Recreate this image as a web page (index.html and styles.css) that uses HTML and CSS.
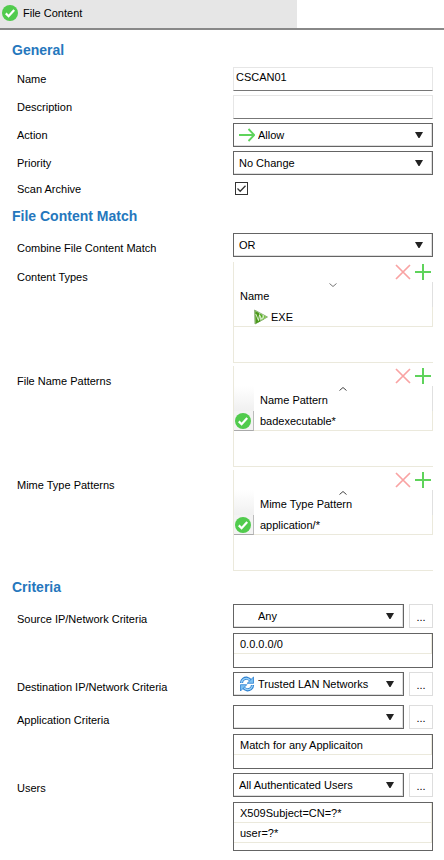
FILE: index.html
```html
<!DOCTYPE html>
<html lang="en">
<head>
    <meta charset="utf-8">
    <title>File Content</title>
    <link rel="stylesheet" href="styles.css">
</head>
<body>
    <!-- shared icons -->
    <svg class="defs" width="0" height="0">
        <symbol id="i-ok" viewBox="0 0 16 16">
            <circle cx="8" cy="8" r="8" fill="#51cb4d"/>
            <path d="M3.800 8.400l2.800 2.800 5.600-6.200" fill="none" stroke="#fff" stroke-width="2.200"/>
        </symbol>
        <symbol id="i-arrow" viewBox="0 0 10 8">
            <path d="M1 1h8L5.500 7h-1z" fill="#222"/>
        </symbol>
        <symbol id="i-del" viewBox="0 0 16 16">
            <path d="M1 1l14 14M15 1L1 15" fill="none" stroke="#f9a3a3" stroke-width="1.700"/>
        </symbol>
        <symbol id="i-add" viewBox="0 0 16 16">
            <path d="M8 0v16M0 8h16" fill="none" stroke="#5fd35b" stroke-width="2"/>
        </symbol>
    </svg>

    <div class="tab-bar">
        <div class="tab"><svg class="icon"><use href="#i-ok"/></svg>File Content</div>
    </div>

    <form class="form">
        <h2>General</h2>
        <div class="section general">
            <div class="row">
                <label for="name">Name</label>
                <input class="text" id="name" type="text" value="CSCAN01">
            </div>
            <div class="row">
                <label for="description">Description</label>
                <input class="text" id="description" type="text">
            </div>
            <div class="row">
                <label for="action">Action</label>
                <div class="combo has-icon">
                    <select id="action"><option>Allow</option></select>
                    <svg class="combo-icon" viewBox="0 0 16 16"><path d="M0 8h15M9.500 2L15.300 8l-5.800 6" fill="none" stroke="#5fd35b" stroke-width="1.800"/></svg>
                    <svg class="combo-arrow"><use href="#i-arrow"/></svg>
                </div>
            </div>
            <div class="row">
                <label for="priority">Priority</label>
                <div class="combo">
                    <select id="priority"><option>No Change</option></select>
                    <svg class="combo-arrow"><use href="#i-arrow"/></svg>
                </div>
            </div>
            <div class="row check-row">
                <label for="archive">Scan Archive</label>
                <div class="check">
                    <input id="archive" type="checkbox" checked>
                    <svg class="tick" viewBox="0 0 13 13"><path d="M2.500 6.500l2.700 2.700 5.300-5.500" fill="none" stroke="#333" stroke-width="1.300"/></svg>
                </div>
            </div>
        </div>

        <h2>File Content Match</h2>
        <div class="section match">
            <div class="row combine-row">
                <label for="combine">Combine File Content Match</label>
                <div class="combo">
                    <select id="combine"><option>OR</option></select>
                    <svg class="combo-arrow"><use href="#i-arrow"/></svg>
                </div>
            </div>
            <div class="row">
                <span class="label" id="l-types">Content Types</span>
                <div class="grid">
                    <div class="tools">
                        <button type="button" aria-label="Remove"><svg class="icon"><use href="#i-del"/></svg></button>
                        <button type="button" aria-label="Add"><svg class="icon"><use href="#i-add"/></svg></button>
                    </div>
                    <table aria-labelledby="l-types">
                        <tr><th>Name<svg class="sort" viewBox="0 0 8 4"><path d="M0.500 0.500L4 3.500 7.500 0.500" fill="none" stroke="#777"/></svg></th></tr>
                        <tr><td class="tree"><div class="type"><svg class="type-icon" viewBox="0 0 14 16">
                            <path d="M0.500 1L13.500 8 1 15z" fill="#cfe6c0" stroke="#8fb27c"/>
                            <path d="M1.200 2l3.800 2 1.500 8.200-5 2.500z" fill="#4c9a1c"/>
                            <path d="M5.500 4.500l2.700 1.300 1.500 4.700-2 1z" fill="#55ad22"/>
                            <path d="M9.500 6.300L12.500 8l-2.300 1.600z" fill="#79c544"/>
                            <path d="M1.800 5l2.700 6.500 1-5.500 2.500 4.500 1.500-4" fill="none" stroke="#e6f5dc" stroke-width=".9"/>
                        </svg>EXE</div></td></tr>
                    </table>
                </div>
            </div>
            <div class="row">
                <span class="label" id="l-names">File Name Patterns</span>
                <div class="grid">
                    <div class="tools">
                        <button type="button" aria-label="Remove"><svg class="icon"><use href="#i-del"/></svg></button>
                        <button type="button" aria-label="Add"><svg class="icon"><use href="#i-add"/></svg></button>
                    </div>
                    <table aria-labelledby="l-names">
                        <tr><td class="corner"></td><th>Name Pattern<svg class="sort" viewBox="0 0 8 4"><path d="M0.500 3.500L4 0.500 7.500 3.500" fill="none" stroke="#444"/></svg></th></tr>
                        <tr><td class="state"><svg class="icon"><use href="#i-ok"/></svg></td><td>badexecutable*</td></tr>
                    </table>
                </div>
            </div>
            <div class="row">
                <span class="label" id="l-mime">Mime Type Patterns</span>
                <div class="grid">
                    <div class="tools">
                        <button type="button" aria-label="Remove"><svg class="icon"><use href="#i-del"/></svg></button>
                        <button type="button" aria-label="Add"><svg class="icon"><use href="#i-add"/></svg></button>
                    </div>
                    <table aria-labelledby="l-mime">
                        <tr><td class="corner"></td><th>Mime Type Pattern<svg class="sort" viewBox="0 0 8 4"><path d="M0.500 3.500L4 0.500 7.500 3.500" fill="none" stroke="#444"/></svg></th></tr>
                        <tr><td class="state"><svg class="icon"><use href="#i-ok"/></svg></td><td>application/*</td></tr>
                    </table>
                </div>
            </div>
        </div>

        <h2>Criteria</h2>
        <div class="section criteria">
            <div class="row">
                <label for="source">Source IP/Network Criteria</label>
                <div class="field">
                    <div class="pick">
                        <div class="combo has-icon">
                            <select id="source"><option>Any</option></select>
                            <svg class="combo-arrow"><use href="#i-arrow"/></svg>
                        </div>
                        <button class="more" type="button">...</button>
                    </div>
                    <ul class="list"><li>0.0.0.0/0</li></ul>
                </div>
            </div>
            <div class="row">
                <label for="destination">Destination IP/Network Criteria</label>
                <div class="pick">
                    <div class="combo has-icon">
                        <select id="destination"><option>Trusted LAN Networks</option></select>
                        <svg class="combo-icon" viewBox="0 0 16 16">
                            <path d="M2.500 7C2.500 3.500 5.500 2 8 2.200c1.500.300 2.600 1 3.500 2" fill="none" stroke="#2b7fd0" stroke-width="3.200"/>
                            <path d="M2.500 6.800C2.700 4 5.500 2 8 2.500c1.300.200 2.300.9 3.300 2" fill="none" stroke="#9bd2f8" stroke-width="1.400"/>
                            <path d="M14.500 1v6.300H8.200z" fill="#7cc0f2" stroke="#2b7fd0" stroke-width=".8"/>
                            <path d="M13.500 9c0 3.500-3 5-5.500 4.800-1.500-.3-2.600-1-3.500-2" fill="none" stroke="#2b7fd0" stroke-width="3.200"/>
                            <path d="M13.500 9.200c-.2 2.800-3 4.800-5.500 4.300-1.300-.2-2.300-.9-3.300-2" fill="none" stroke="#9bd2f8" stroke-width="1.400"/>
                            <path d="M1.500 15V8.700h6.300z" fill="#7cc0f2" stroke="#2b7fd0" stroke-width=".8"/>
                        </svg>
                        <svg class="combo-arrow"><use href="#i-arrow"/></svg>
                    </div>
                    <button class="more" type="button">...</button>
                </div>
            </div>
            <div class="row app-row">
                <label for="application">Application Criteria</label>
                <div class="field">
                    <div class="pick">
                        <div class="combo">
                            <select id="application"><option></option></select>
                            <svg class="combo-arrow"><use href="#i-arrow"/></svg>
                        </div>
                        <button class="more" type="button">...</button>
                    </div>
                    <ul class="list"><li>Match for any Applicaiton</li></ul>
                </div>
            </div>
            <div class="row">
                <label for="users">Users</label>
                <div class="field">
                    <div class="pick">
                        <div class="combo">
                            <select id="users"><option>All Authenticated Users</option></select>
                            <svg class="combo-arrow"><use href="#i-arrow"/></svg>
                        </div>
                        <button class="more" type="button">...</button>
                    </div>
                    <ul class="list"><li>X509Subject=CN=?*</li><li>user=?*</li></ul>
                </div>
            </div>
        </div>
    </form>
</body>
</html>
```
FILE: styles.css
```css
* { box-sizing: border-box; }
body { margin: 0; background: #fff; color: #000; font: 11px/14px "Liberation Sans", Arial, sans-serif; }
svg { display: block; }
button, input, select { font: inherit; color: inherit; margin: 0; border-radius: 0; }
.defs { position: absolute; }
.icon { width: 16px; height: 16px; }

/* tab strip */
.tab-bar { border-bottom: 2px solid #888; }
.tab { display: flex; align-items: center; gap: 5px; width: 67%; height: 28px; padding: 0 2px 2px; background: #e6e6e6; }

.form { padding: 0 11px 8px 12px; }
h2 { margin: 0; padding: 12px 0 9px; font-size: 14px; line-height: 16px; color: #2577bd; }
.section { display: flex; flex-direction: column; gap: 4px; }
.row { display: grid; grid-template-columns: 221px minmax(0, 1fr); align-items: start; }
.row label, .label { padding: 8px 0 0 5px; }
.general .row label { padding-top: 5px; }
.general .check-row label { padding-top: 3px; }
.match { gap: 3px; }
.match + h2 { padding: 8px 0 9px; }
.general + h2 { padding: 9px 0; }
.combine-row { margin-bottom: 2px; }
.app-row { margin-top: 5px; }

/* controls */
.text { width: 100%; height: 24px; padding: 0 2px 4px; border: 1px solid #e6e6e6; border-bottom-color: #777; background: #fff; }
.combo { position: relative; flex: 1; min-width: 0; }
.combo select { display: block; width: 100%; height: 24px; padding: 0 24px 0 5px; border: 1px solid #646464; background: #fff; box-shadow: inset -1px -1px #ddd; appearance: none; }
.has-icon select { padding-left: 24px; }
.combo-icon { position: absolute; left: 6px; top: 4px; width: 16px; height: 16px; pointer-events: none; }
.combo-arrow { position: absolute; right: 9px; top: 8px; width: 10px; height: 8px; pointer-events: none; }
.check-row { height: 20px; }
.check { position: relative; padding: 3px 2px; }
.check input { display: block; width: 13px; height: 13px; border: 1px solid #333; background: #fff; appearance: none; }
.tick { position: absolute; left: 2px; top: 3px; width: 13px; height: 13px; pointer-events: none; }
.pick { display: flex; gap: 5px; }
.more { width: 24px; height: 24px; padding: 2px 0 0; border: 1px solid #ddd; background: #fff; }

/* editable grids */
.grid { height: 101px; border-left: 1px solid #ebe9dc; border-bottom: 1px solid #ebe9dc; }
.tools { display: flex; justify-content: flex-end; gap: 4px; height: 20px; padding: 2px 2px 0; }
.tools button { height: 16px; padding: 0; border: 0; background: none; }
.grid table { width: 100%; border-spacing: 0; }
.grid th { position: relative; height: 25px; padding: 2px 0 0 6px; border-right: 1px solid #e0e0e0; font-weight: normal; text-align: left; }
.grid td { height: 20px; padding: 0 0 0 6px; border-right: 1px solid #ebe9dc; border-bottom: 1px solid #ebe9dc; }
.sort { position: absolute; left: 50%; top: 1px; width: 8px; height: 4px; margin-left: -4px; }
.grid .corner { width: 20px; height: 25px; padding: 0; border: 0; background: linear-gradient(#fff, #f0f0f0); }
.grid .state { width: 20px; padding: 0 1px; border-right-color: #bbb; border-bottom-color: #aaa; background: #f3f3f3; }
.grid .tree { padding-left: 20px; }
.type { display: flex; align-items: center; gap: 3px; }
.type-icon { width: 14px; height: 16px; }

/* read-only lists */
.list { min-height: 35px; margin: 5px 0 0; padding: 0 0 7px; border: 1px solid #646464; list-style: none; }
.list li { height: 20px; padding: 3px 6px 2px; border-right: 1px solid #ebe9dc; border-bottom: 1px solid #ebe9dc; }
```
